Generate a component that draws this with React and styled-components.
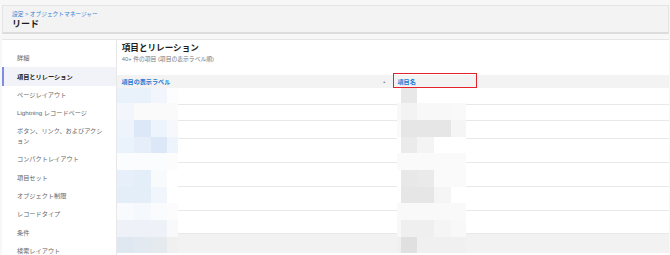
import React from "react";
import styled, { createGlobalStyle } from "styled-components";

const GlobalStyle = createGlobalStyle`
  html, body {
    margin: 0;
    padding: 0;
    background: #f7f7f7;
    font-family: "Liberation Sans", "Noto Sans CJK JP", sans-serif;
  }
`;

const Page = styled.div`
  width: 670px;
  height: 255px;
  padding: 5px 1px 0 2px;
  box-sizing: border-box;
  display: flex;
  flex-direction: column;
  gap: 5px;
  overflow: hidden;
`;

const Header = styled.div`
  height: 29px;
  flex: none;
  box-sizing: border-box;
  background: #f3f3f3;
  border: 1px solid #e4e4e4;
  border-bottom: 2px solid #dcdcdc;
  padding: 4px 9px 0;
`;

const Breadcrumb = styled.div`
  font-size: 5.7px;
  line-height: 8px;
  color: #2f80d0;
`;

const PageTitle = styled.div`
  font-size: 9px;
  line-height: 12px;
  font-weight: 700;
  color: #1a1a1a;
`;

const Card = styled.div`
  flex: 1;
  display: flex;
  background: #fff;
  border-top: 1px solid #e6e6e6;
`;

const Sidebar = styled.nav`
  width: 114px;
  flex: none;
  border-right: 1px solid #e8e8e8;
  padding-top: 9px;
`;

const NavItem = styled.div`
  padding: 4.3px 10px 4.3px 13px;
  font-size: 6.2px;
  line-height: 9.7px;
  color: ${(p) => (p.$active ? "#222" : "#666")};
  font-weight: ${(p) => (p.$active ? 700 : 400)};
  background: ${(p) => (p.$active ? "#f1f3f9" : "transparent")};
  border-left: 2px solid ${(p) => (p.$active ? "#7d8de2" : "transparent")};
`;

const Content = styled.div`
  flex: 1;
  display: flex;
  flex-direction: column;
`;

const TitleBlock = styled.div`
  padding: 3px 0 0 4.7px;
  height: 31px;
  box-sizing: border-box;
`;

const SectionTitle = styled.div`
  font-size: 8.6px;
  line-height: 11px;
  font-weight: 700;
  color: #1c1c1c;
`;

const Subtitle = styled.div`
  margin-top: 2px;
  font-size: 5.8px;
  line-height: 7px;
  color: #777;
`;

const Table = styled.div`
  margin-top: 4px;
  display: flex;
  flex-direction: column;
`;

const HeadRow = styled.div`
  display: flex;
  height: 13px;
  background: #f3f3f3;
`;

const HeadCell = styled.div`
  position: relative;
  display: flex;
  align-items: center;
  justify-content: space-between;
  box-sizing: border-box;
  width: ${(p) => (p.$w ? `${p.$w}px` : "auto")};
  flex: ${(p) => (p.$w ? "none" : 1)};
  padding: 0 7px 0 4.5px;
  font-size: 6.1px;
  font-weight: 700;
  color: #1b7ad4;
`;

const SortArrow = styled.span`
  font-size: 3.5px;
  color: #8a8a8a;
`;

const Highlight = styled.div`
  position: absolute;
  left: -0.3px;
  top: -2.5px;
  width: 84px;
  height: 15.8px;
  box-sizing: border-box;
  border: 1.7px solid #e4232d;
`;

const Body = styled.div`
  position: relative;
  display: flex;
  flex-direction: column;
`;

const Row = styled.div`
  height: ${(p) => p.$h}px;
  box-sizing: border-box;
  background: ${(p) => (p.$shade ? "#f2f2f2" : "#fff")};
  border-bottom: ${(p) => (p.$shade ? "none" : "1.3px solid #e8e8e8")};
`;

const Mosaic = styled.div`
  position: absolute;
  top: 0;
  left: ${(p) => p.$left}px;
  display: grid;
  grid-template-columns: ${(p) => p.$cols};
  grid-template-rows: 15.3px repeat(9, 16.67px);
`;

const Tile = styled.div`
  background: ${(p) => p.$c};
`;

const navItems = [
  "詳細",
  "項目とリレーション",
  "ページレイアウト",
  "Lightning レコードページ",
  "ボタン、リンク、およびアクション",
  "コンパクトレイアウト",
  "項目セット",
  "オブジェクト制限",
  "レコードタイプ",
  "条件",
  "検索レイアウト",
];

const rowHeights = [17, 16, 18, 24, 24, 24, 23];

const labelTiles = [
  ["#e9f1fb", "#e9f1fb", "#f2f6fc", "#fcfdfe"],
  ["#f3f7fc", "#fafafa", "#fafafa", "#fafafa"],
  ["#eef4fb", "#dce8f7", "#eef4fb", "#f6f8fb"],
  ["#eaf2fb", "#e6eff9", "#dce8f7", "#eef4fb"],
  ["#fbfcfd", "#fbfcfd", "#fbfcfd", "#fcfcfd"],
  ["#e6effa", "#e4eef9", "#f8fafc", "#ffffff"],
  ["#e3eef9", "#e3eef9", "#f0f6fc", "#ffffff"],
  ["#f8fafd", "#f5f8fc", "#fafbfc", "#fcfcfc"],
  ["#eef2f8", "#eef2f8", "#eef2f8", "#f8f9fa"],
  ["#dfe7f0", "#e3e9f1", "#e5eaef", "#f0f0f0"],
];

const nameTiles = [
  ["#ffffff", "#e8e8e8", "#ffffff", "#ffffff", "#ffffff"],
  ["#f8f8f8", "#f3f3f3", "#f8f8f8", "#f8f8f8", "#f9f9f9"],
  ["#fafafa", "#e6e6e6", "#e6e6e6", "#e6e6e6", "#f5f5f5"],
  ["#ffffff", "#ebebeb", "#f4f4f4", "#ffffff", "#ffffff"],
  ["#fafafa", "#fafafa", "#fafafa", "#fafafa", "#fafafa"],
  ["#ffffff", "#e8e8e8", "#eaeaea", "#fafafa", "#fafafa"],
  ["#ffffff", "#e6e6e6", "#e6e6e6", "#f5f5f5", "#ffffff"],
  ["#f9f9f9", "#f9f9f9", "#f9f9f9", "#f9f9f9", "#f9f9f9"],
  ["#f8f8f8", "#efefef", "#efefef", "#f5f5f5", "#f8f8f8"],
  ["#f0f0f0", "#e0e0e0", "#f0f0f0", "#f0f0f0", "#f0f0f0"],
];

const Pixelated = ({ tiles, left, cols }) => (
  <Mosaic $left={left} $cols={cols}>
    {tiles.flatMap((row, r) =>
      row.map((c, i) => <Tile key={`${r}-${i}`} $c={c} />)
    )}
  </Mosaic>
);

export default function App() {
  return (
    <>
      <GlobalStyle />
      <Page>
        <Header>
          <Breadcrumb>設定 &gt; オブジェクトマネージャー</Breadcrumb>
          <PageTitle>リード</PageTitle>
        </Header>
        <Card>
          <Sidebar>
            {navItems.map((item, i) => (
              <NavItem key={item} $active={i === 1}>
                {item}
              </NavItem>
            ))}
          </Sidebar>
          <Content>
            <TitleBlock>
              <SectionTitle>項目とリレーション</SectionTitle>
              <Subtitle>40+ 件の項目 (項目の表示ラベル順)</Subtitle>
            </TitleBlock>
            <Table>
              <HeadRow>
                <HeadCell $w={276}>
                  項目の表示ラベル
                  <SortArrow>▲</SortArrow>
                </HeadCell>
                <HeadCell>
                  項目名
                  <Highlight />
                </HeadCell>
              </HeadRow>
              <Body>
                {rowHeights.map((h, i) => (
                  <Row key={i} $h={h} />
                ))}
                <Row $h={19} $shade />
                <Pixelated
                  tiles={labelTiles}
                  left={0.3}
                  cols="16.7px 16.6px 16.7px 11px"
                />
                <Pixelated
                  tiles={nameTiles}
                  left={280.3}
                  cols="3.4px 16.6px 16.7px 16.7px 15.3px"
                />
              </Body>
            </Table>
          </Content>
        </Card>
      </Page>
    </>
  );
}
